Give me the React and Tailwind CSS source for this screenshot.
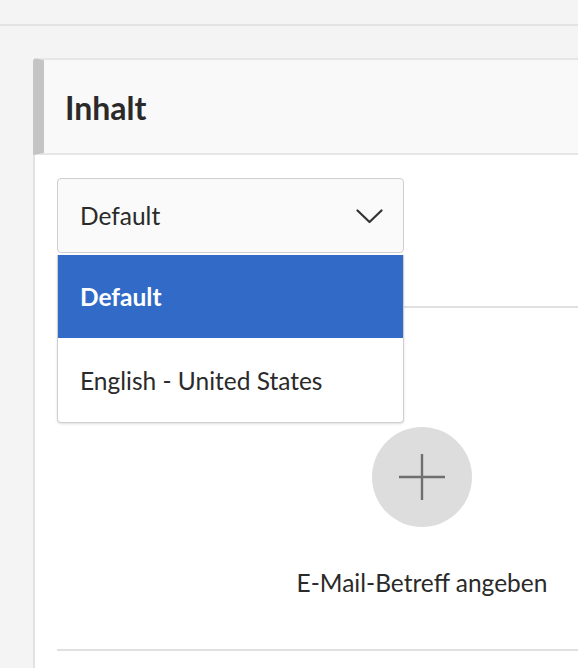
import React from "react";

export default function App() {
  return (
    <div
      className="h-[668px] w-full overflow-hidden bg-[#f4f4f4] text-[#2a2a2a]"
      style={{ fontFamily: "Lato, 'Open Sans', sans-serif" }}
    >
      <div className="h-[26px] border-b-2 border-[#e3e3e3]" />
      <div className="pl-[33px] pt-[32px]">
        <div className="flex w-[776px] flex-col">
          <div className="flex h-[97px] items-center rounded-tl-[4px] border-t-2 border-b-2 border-l-[11px] border-[#e6e6e6] border-l-[#c4c4c4] bg-[#f9f9f9] pl-[21px] pt-[3px]">
            <span className="text-[32px] font-bold leading-none">Inhalt</span>
          </div>
          <div className="relative border-l-2 border-[#e3e3e3] bg-white px-[22px] pb-[40px] pt-[23px]">
            <div className="relative z-10 w-[347px]">
              <div className="flex h-[75px] items-center justify-between rounded-[4px] border border-[#cfcfcf] bg-[#fafafa] pl-[22px] pr-[20px] pt-[2px]">
                <span className="text-[24.5px] leading-none">Default</span>
                <svg width="27" height="15" viewBox="0 0 27 15" fill="none">
                  <polyline
                    points="1.5,1.5 13.5,13 25.5,1.5"
                    stroke="#333"
                    strokeWidth="2.2"
                    strokeLinecap="round"
                    strokeLinejoin="round"
                  />
                </svg>
              </div>
              <div className="absolute left-0 top-[77px] w-full overflow-hidden rounded-b-[4px] border-x border-b border-[#cfcfcf] bg-white shadow-sm">
                <div className="-mx-px flex h-[83px] items-center bg-[#316bc7] pl-[23px] pt-[2px] text-white">
                  <span className="text-[24.5px] font-bold leading-none">Default</span>
                </div>
                <div className="flex h-[84px] items-center pl-[22px] pt-[2px]">
                  <span className="text-[24.5px] leading-none">English - United States</span>
                </div>
              </div>
            </div>
            <div className="mt-[53px] flex flex-col items-center border-y-2 border-[#e0e0e0] pb-[51px] pt-[119px]">
              <div className="flex h-[100px] w-[100px] items-center justify-center rounded-full bg-[#dddddd]">
                <svg width="48" height="48" viewBox="0 0 48 48" fill="none">
                  <line x1="24" y1="1" x2="24" y2="47" stroke="#6f6f6f" strokeWidth="2.4" />
                  <line x1="1" y1="24" x2="47" y2="24" stroke="#6f6f6f" strokeWidth="2.4" />
                </svg>
              </div>
              <div className="mt-[41px] text-[24.5px] leading-[30px]">E-Mail-Betreff angeben</div>
            </div>
          </div>
        </div>
      </div>
    </div>
  );
}
